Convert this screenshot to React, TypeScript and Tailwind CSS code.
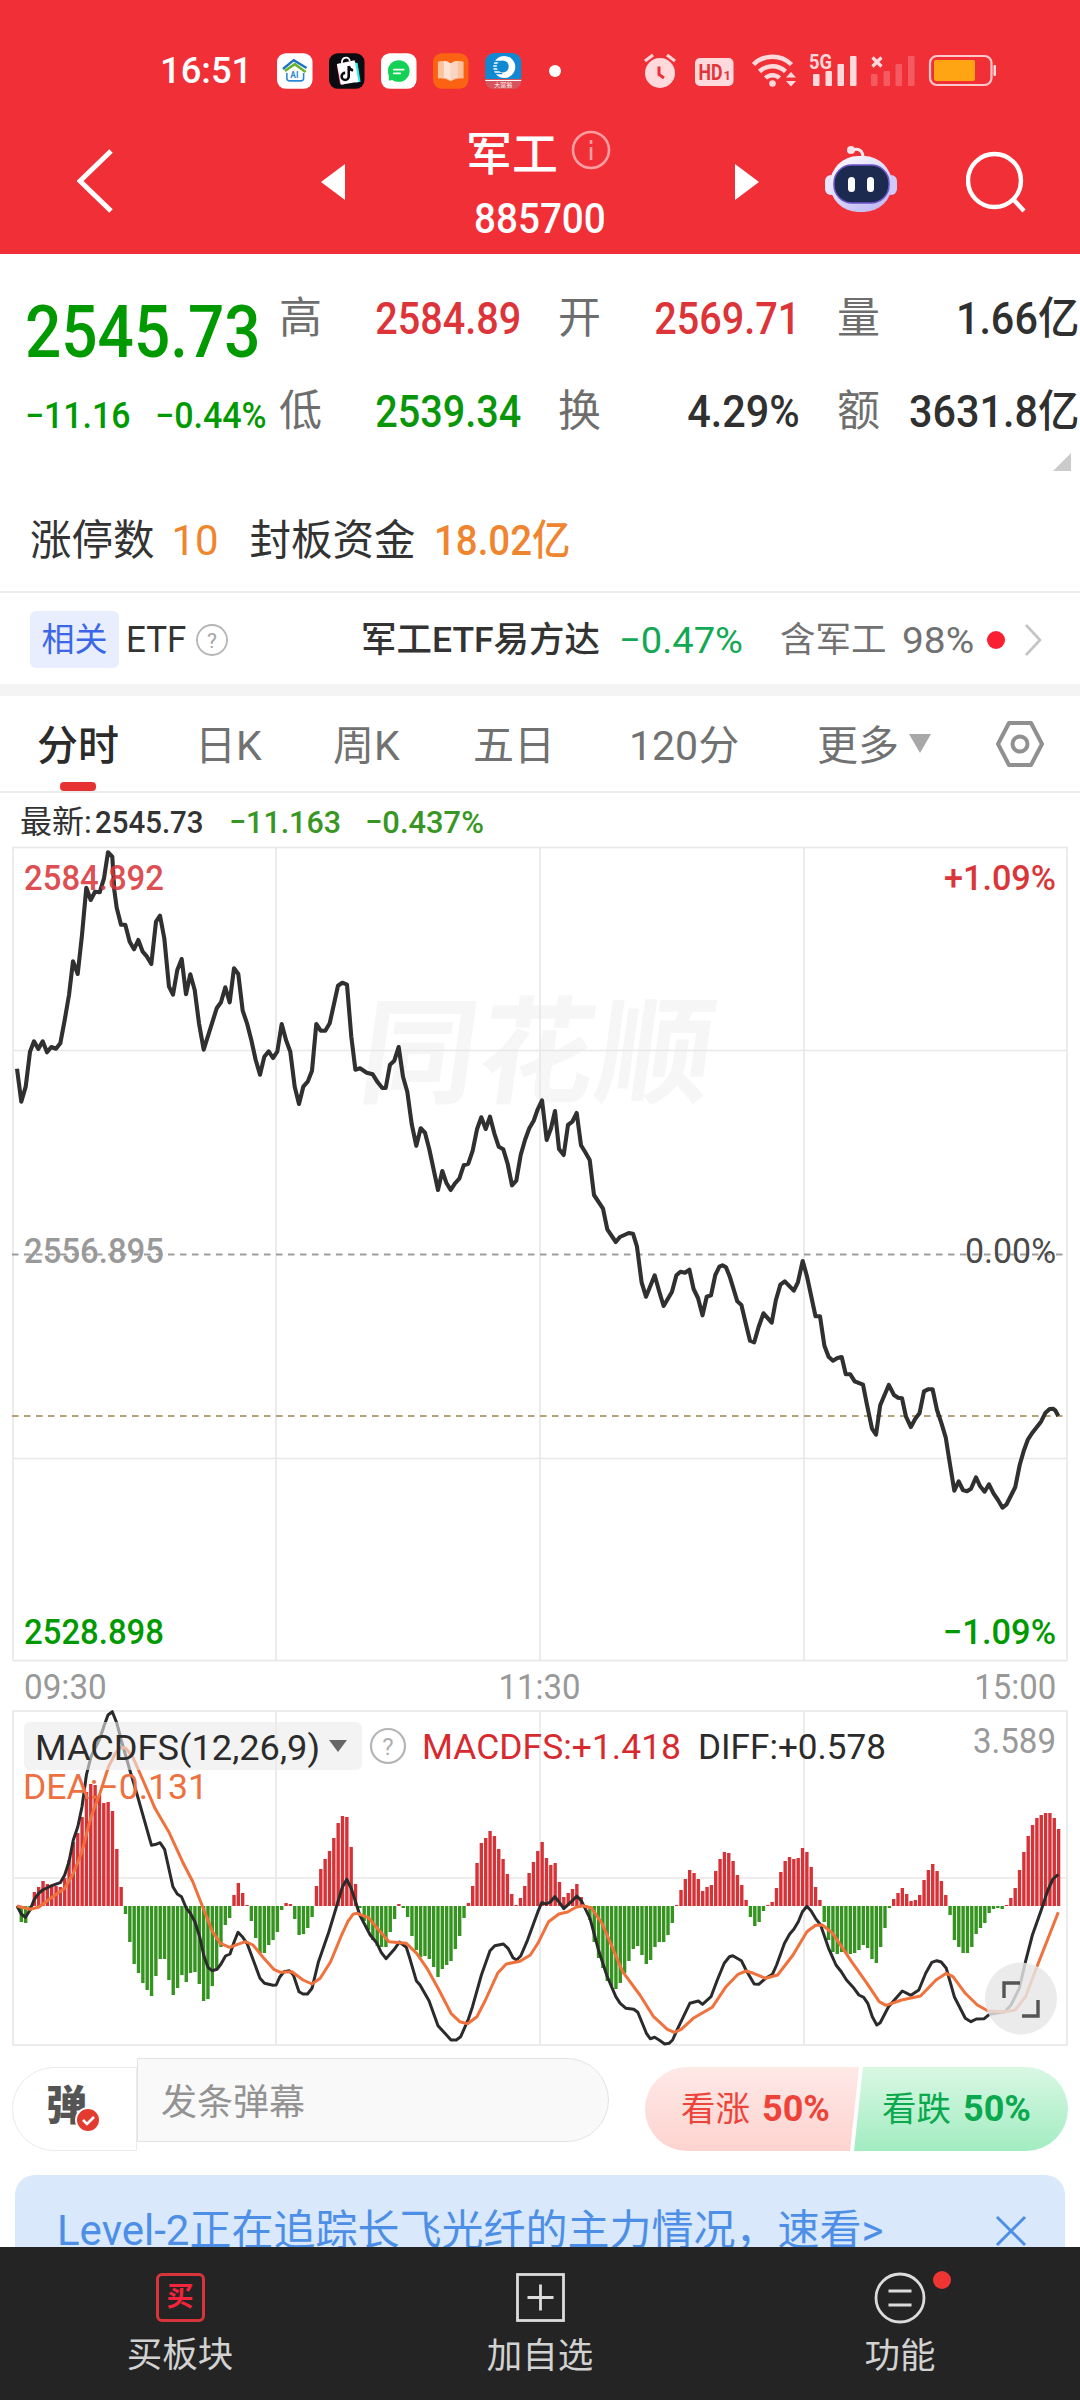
import type { ReactNode } from "react";
import clsx from "clsx";

// Intraday price line, x/y in chart pixels
const PRICE =
  "17,1068.7 21.3,1101.7 25.7,1086.7 30,1051.7 34,1041.3 38.3,1049 42.7,1041.3 47,1052.3 51.3,1047 56,1048.7 60.3,1043.3 64.7,1020 69,995 73,961.3 77.7,974 82,935 86.3,887.7 90.7,900 95,891.7 99.7,892.3 104,878.3 108,852.3 112.3,856.7 114.3,890 116.7,907.7 121,924.7 125.3,924.7 129.7,941.7 134,949.3 138.3,940 142.7,951.7 147,956.7 151.3,964 156,921.7 160,915.7 164.3,938.3 169,986.7 173,994.7 177.3,970 181.7,959 186,994.3 190.3,974.3 194.7,990 199,1023.3 203.7,1049.7 216.7,1008.3 221,1002.3 225.3,987.3 229.7,1002.3 234,968.3 238.3,974 242.7,1010.7 247,1023.3 251.3,1040 255.7,1060 260,1074.7 264.3,1056.7 268.7,1051.3 273,1058 277.3,1051.7 281.7,1024 286,1040 290.3,1051.7 294.7,1086.7 299,1104 303.3,1086.7 307.7,1081.7 312,1070.7 316.3,1024 320.7,1030.7 325.3,1030.7 329.7,1023.3 338,985.7 342.3,982.7 347,984.7 351.3,1036.7 355.4,1069.7 360,1068.3 366.7,1072.7 372.7,1074.3 377.7,1082.3 382.3,1088 385.7,1088 390,1064.7 394.3,1060.7 398.7,1047 403,1076.7 407.3,1091.7 411.7,1124 416.3,1145.7 420.7,1128.3 425,1132.7 429.3,1149.3 438,1190 442.3,1171 446.3,1182.7 450.7,1190 455,1183.3 459.3,1178.7 463.7,1165.3 468.3,1163.7 472.7,1150.7 477,1129.3 481.3,1117.3 485.7,1129 490,1116.7 494.3,1133.3 498.7,1146.7 503.3,1149.3 507.7,1164 512,1185.3 516.3,1180.7 520.7,1155 525,1140 529.3,1128.3 533.7,1120.7 537.7,1109.3 542,1100.3 546.7,1140 551,1128.3 555,1111 559,1149 563.7,1155 568,1125 572.3,1121.7 576.7,1113 581,1145.3 585.3,1152.3 589.7,1160 594,1195 603,1208.7 607.3,1229.3 615.8,1242 619.9,1237 628.8,1233 633,1233.7 637,1246.7 641.6,1282.3 646,1296.7 654.7,1275.3 659,1290.7 663.6,1306 671.9,1292 676.4,1275.3 680.5,1271.7 685,1272.7 689.4,1269.7 693.6,1289 698,1298 702.5,1315.3 706.7,1296.7 711,1295.3 715.3,1275 719.4,1266.7 722.5,1265.3 726,1267.3 730,1277.3 737.3,1301.3 741.4,1305 745.6,1322.7 750,1340.7 754.2,1342.3 758.7,1326.7 763.5,1313.3 771.7,1322.7 775.9,1300 780.4,1284.7 784.8,1281.3 793.8,1290.7 797.9,1282.3 802.7,1261 806.9,1276 815.5,1316.3 820,1316.3 824.4,1345.7 828.6,1356.7 833,1360.7 837.5,1358 841.7,1357 845.8,1374.3 850.3,1374.3 854.7,1381.3 863,1384.7 867.1,1405.3 872,1428.7 876,1434.7 880.2,1405.3 888.8,1385 894,1395 898,1397.7 902,1398.3 906,1416.7 910.9,1427 915.3,1418.7 919.5,1413.3 924,1391.3 928,1389.3 932.6,1389.3 937,1410 941.5,1423.3 945.7,1437.3 949.8,1463.3 954.3,1490.7 958.7,1481.3 962.9,1490 967,1491.3 971,1488.7 976,1477.3 980,1486 984.6,1491.7 989,1484.3 993.5,1493.3 998,1500 1002.5,1507.7 1006.6,1504.3 1015.2,1487.3 1019.7,1465 1023.8,1450.7 1028,1439.3 1032.4,1432.7 1041,1421.7 1045.5,1412.7 1049.6,1409 1053,1408.7 1055.5,1410.7 1058.3,1416";

const DIFF =
  "17,1906 21.3,1914 25.5,1917.3 30,1910 34,1900 38.6,1893.3 42.7,1890 51.7,1885.7 60.3,1882.7 64.7,1875 69,1861.7 73.3,1840 77.8,1826.7 82,1806.7 86.4,1775 91,1756.7 100,1738.3 104,1726 108,1715 112.3,1711.7 116.7,1722.7 121.2,1740 129.8,1770 136.7,1793.3 151.5,1845.3 156,1844.3 160,1842.7 164.6,1849.3 172.9,1886.7 177.3,1894 181.5,1896.7 186.3,1908.3 190.4,1913.3 194.9,1921.7 199.7,1936.7 203.9,1956 208,1967.3 212,1970.7 217,1969.3 221,1964 225.5,1956 230,1954 234.2,1941.7 238,1932.3 242.8,1937.3 247,1943.3 251.4,1955 260,1978.3 264.5,1983.3 273,1985.3 276.2,1985 279.6,1977.3 284,1971.7 289.3,1970.7 293.4,1975 299,1991.7 303,1994 307.5,1994 312,1988.3 318.5,1961.7 328.9,1931.7 337.5,1903.3 342.3,1887.3 346.8,1879.3 351.2,1888.3 359.8,1915 370.2,1935 377,1943.3 381.2,1952.3 386,1958.7 394.3,1949.3 399.4,1942 406.3,1947.3 409.8,1958.3 416.3,1980.7 420,1985 429,2000.7 438,2025.7 444.9,2033.3 451,2040 456.3,2040 460.7,2036.7 468.3,2019.3 472.5,2006.7 481.4,1975 490,1950.7 494.8,1945.7 503.4,1944 508,1948.3 513,1957.7 516.5,1960 520.7,1956 526.9,1941.7 537.9,1911.7 541.7,1902.7 546.2,1904 550.3,1902 554.8,1896.7 559.6,1902.7 563.8,1908.7 572.4,1900.7 576.8,1896 581.3,1900.7 590,1918.3 598.5,1950 607,1976 615.8,1996.7 620.2,2003.3 626,2008.3 633.7,2009.3 637.8,2012.3 646.4,2033.3 650.2,2038.7 654.7,2037.3 659.5,2040.3 664.7,2044 669,2043.3 672.6,2040 676.7,2030.7 689.8,2003.3 698.4,2001 702.5,2004.3 711,1996.7 717.3,1980 724.2,1963.3 729.4,1956.7 732.8,1955.7 741.4,1960.7 746,1970 754.2,1984 758.7,1984.3 765.6,1978.3 772.4,1974.3 776.6,1965 784.5,1943.3 789.7,1934 793.8,1929.3 798.3,1921.7 802.4,1911.7 806.9,1906.3 811,1910.7 815.5,1918.3 820.6,1925 828.6,1948.3 836,1965 841.3,1971.7 846.5,1980 854,1988.3 858.9,1995 863.7,1997.3 867.8,2003.3 872.3,2016.7 876.8,2025 880.2,2022.7 888.5,2006.7 902.3,1991 910.9,1995.3 918.8,1990 925.7,1973.3 931.9,1962.3 936.7,1960.7 941.2,1962 946.3,1968.3 954.3,1996.7 965.3,2018.3 971,2021.7 976.3,2019 984.2,2018.7 989.4,2014.3 1004.9,2011.7 1011,2005 1019.3,1988.3 1025.5,1961.7 1032.4,1935 1041,1910.7 1047.9,1890 1053,1879 1058.3,1874.3";

const DEA =
  "17,1906 30,1909.3 38.6,1907.3 48.2,1900 64.7,1888.3 73.3,1873.3 82,1851.7 91,1816.7 100,1793.3 108.5,1766.7 115.4,1753.3 121.2,1747.3 125.7,1748.3 132.6,1756.7 142.9,1780 155,1808.3 168.7,1831.7 182.5,1861.7 192.8,1881.7 203.2,1908.3 212.5,1931.7 220.4,1943.3 229.7,1947.3 237.6,1944.3 245.5,1941.7 253,1945 263.4,1957.7 273.8,1969.3 280.6,1972.3 292,1971.7 303,1980 312,1984 320.2,1978.3 330.6,1961.7 340.9,1936.7 347.8,1921.7 353,1914.3 357,1913.3 368.5,1917.7 378.8,1930 389,1941.7 406.3,1943.3 416.7,1953.3 427,1968.3 439,1990 451,2013.3 459.7,2021.7 467.6,2023.7 476.9,2016.7 485.5,2000 497.6,1973.3 506.2,1964 520,1961.3 530.3,1955 537.9,1943.3 548.6,1921.7 558.9,1914 567.5,1912 576,1907.3 583,1905.7 591.7,1908.3 602,1923.3 610.6,1943.3 622.6,1971.7 639.9,1995 653.6,2016.7 667.4,2029.3 674.3,2032.3 681.2,2029.3 693.2,2018.3 712.2,2007.3 726,1986.7 738,1974.3 746,1971 753.5,1973.3 765.6,1978.3 777.6,1975 793,1955 806.9,1931.7 815.5,1925.3 822.4,1925 832.7,1933.3 851.6,1961.7 867,1983.3 879.2,2001.7 886,2005.3 901.6,2000 920.5,1996 936,1980 946.3,1973.3 953,1976.7 965.3,1993.3 977.3,2005 987.7,2010.7 1003,2012 1015.2,2010 1025.5,1996.7 1037.6,1965 1058.3,1912.3";

// One MACD bar per minute, positive bars are red
const BARS = [
  0, -16, -17, -5, 14, 19, 25, 22, 21, 20, 19, 28, 46, 64, 73, 89, 114, 122, 121, 111,
  103, 104, 95, 57, 19, -8, -36, -58, -67, -77, -84, -90, -70, -53, -53, -74, -89, -82, -69, -76,
  -67, -66, -78, -95, -93, -80, -62, -41, -19, -12, 11, 23, 13, 1, -15, -32, -47, -47, -39, -34,
  -26, -4, 3, 2, -13, -29, -28, -22, -11, 20, 37, 47, 55, 68, 83, 90, 89, 59, 22, -2,
  -15, -24, -34, -40, -41, -41, -26, -13, 2, -2, -11, -30, -44, -51, -50, -53, -61, -71, -63, -59,
  -55, -43, -30, -12, 3, 20, 43, 63, 68, 75, 70, 57, 47, 32, 12, 1, 8, 20, 33, 44,
  55, 64, 48, 41, 43, 24, 9, 13, 17, 22, 9, 1, -14, -36, -52, -62, -75, -80, -83, -77,
  -67, -55, -43, -40, -49, -58, -54, -41, -36, -36, -29, -17, 1, 16, 27, 36, 33, 27, 15, 19,
  21, 35, 47, 54, 53, 45, 31, 21, 6, -11, -20, -16, -5, 1, 4, 18, 34, 45, 49, 47,
  48, 58, 54, 39, 19, 6, -16, -34, -46, -48, -46, -47, -48, -47, -44, -39, -42, -53, -57, -41,
  -22, -2, 7, 13, 18, 12, 5, 6, 11, 26, 36, 42, 35, 25, 11, -9, -34, -41, -47, -47,
  -41, -28, -22, -17, -7, -3, -2, -3, 1, 8, 18, 36, 54, 70, 81, 88, 91, 93, 93, 88, 77,
];

const NUM = "inline-block whitespace-nowrap font-medium leading-none";

function StatusBar() {
  return (
    <div className="flex h-full items-center pt-[42px] pl-[160px]">
      <span className="w-[117px] text-[37.5px] leading-none font-medium text-white">
        <span className="inline-block origin-left scale-x-[0.97]">16:51</span>
      </span>
      <div className="flex gap-[16.5px]">
        <svg width="35.5" height="36" viewBox="0 0 36 36">
          <rect width="36" height="36" rx="9" fill="#fff" />
          <path d="M6 16 17 7l13 8" fill="none" stroke="#1d72c4" strokeWidth="2.4" />
          <path d="M8 18 18 11l11 8" fill="none" stroke="#6ab42d" strokeWidth="2.6" />
          <path d="M10 20v5q0 3 3 3h11q3 0 3-3v-5" fill="none" stroke="#2b88d8" strokeWidth="1.6" />
          <text x="13.5" y="25" fontSize="8.5" fontWeight="700" fill="#2b88d8">AI</text>
        </svg>
        <svg width="35.5" height="36" viewBox="0 0 36 36">
          <rect width="36" height="36" rx="9" fill="#0b0b12" />
          <path d="m8 12 3-2 4 22-4-1z" fill="#ff2a56" />
          <path d="m25 9 4 1 3 19-5 1z" fill="#2bf0ea" />
          <path d="m8 11 18-4 4 22-18 3z" fill="#fff" />
          <path d="M13 10c0-7 8-7 8-2" fill="none" stroke="#fff" strokeWidth="1.8" />
          <path d="M20 13v10.5a3.6 3.6 0 1 1-3.6-3.6M20 13q1 4 4.5 4.3" fill="none" stroke="#0b0b12" strokeWidth="2.6" />
        </svg>
        <svg width="35.5" height="36" viewBox="0 0 36 36">
          <rect width="36" height="36" rx="9" fill="#fff" />
          <circle cx="18" cy="18" r="11" fill="#12d155" />
          <path d="M8 22v6l7-2z" fill="#12d155" />
          <path d="M13 16.5h10M13 20.5h6.5" stroke="#fff" strokeWidth="1.8" strokeLinecap="round" />
        </svg>
        <svg width="35.5" height="36" viewBox="0 0 36 36">
          <rect width="36" height="36" rx="9" fill="#fb6312" />
          <path d="M5 8.5q7-2 13 2 6-4 13-2v17q-7-1-13 3-6-4-13-3z" fill="#fbc2a0" />
          <path d="M11 7.5q4 0 7 3v17q-3-3-7-3z" fill="#fde4d6" />
          <path d="M25 7.5q-4 0-7 3v17q3-3 7-3z" fill="#fbd5c1" />
        </svg>
        <svg className="overflow-visible" width="36.5" height="36" viewBox="0 0 36 36">
          <rect width="36" height="36" rx="9" fill="#1188d2" />
          <path d="M0 26h36v1q0 9-9 9H9q-9 0-9-9z" fill="#d8545c" />
          <path d="M0 27.5h36" stroke="#fff" strokeWidth="1" />
          <circle cx="19" cy="14" r="11" fill="#fff" />
          <circle cx="17.5" cy="13.5" r="6" fill="#1188d2" />
          <path d="M8 8.5h8M7 11.5h8M7 14.5h8M7 17.5h8M9 20.5h8" stroke="#1188d2" strokeWidth="1.3" />
          <text x="18" y="34" textAnchor="middle" fontSize="6" fill="#fff">大富翁</text>
        </svg>
      </div>
      <span className="ml-[27px] size-3 rounded-full bg-white" />
      <svg className="ml-[82px] overflow-visible" width="356" height="36" viewBox="643 53 356 36" fill="#ffd9db">
        <circle cx="660" cy="73" r="15" />
        <path d="m645 61 8-6M675 61l-8-6" stroke="#ffd9db" strokeWidth="3" />
        <path d="M659 66.5v8l5 3.5" fill="none" stroke="#f12f36" strokeWidth="3" />
        <rect x="695" y="58" width="38.5" height="28" rx="5" />
        <text x="698.5" y="80" fontSize="22" fontWeight="700" fill="#e0353b" textLength="24" lengthAdjust="spacingAndGlyphs">HD</text>
        <text x="723.5" y="80" fontSize="13" fontWeight="700" fill="#e0353b">1</text>
        <g fill="none" stroke="#ffd9db" strokeWidth="4.5">
          <path d="M753.5 64.5a27 27 0 0 1 38 0" />
          <path d="M759.5 71.5a19 19 0 0 1 26 0" />
          <path d="M765.5 78a10 10 0 0 1 14 0" />
        </g>
        <circle cx="772.5" cy="83.5" r="3.3" />
        <path d="m786 77.5 5-5.5 5 5.5zM786 81l5 5.500 5-5.5z" />
        <text x="809" y="69" fontSize="21" fontWeight="700" textLength="23" lengthAdjust="spacingAndGlyphs">5G</text>
        <rect x="813" y="74" width="6.5" height="12" rx="1" />
        <rect x="825.5" y="71" width="6.5" height="15" rx="1" />
        <rect x="837.5" y="64" width="6.5" height="22" rx="1" />
        <rect x="850" y="56" width="6.5" height="30" rx="1" />
        <path d="m872.5 57.5 9 9m0-9-9 9" stroke="#ffd9db" strokeWidth="3.2" />
        <g opacity=".25">
          <rect x="871" y="74" width="6.5" height="12" rx="1" />
          <rect x="883.5" y="71" width="6.5" height="15" rx="1" />
          <rect x="895.5" y="64" width="6.5" height="22" rx="1" />
          <rect x="908" y="56" width="6.5" height="30" rx="1" />
        </g>
        <rect x="930" y="56" width="61.5" height="29" rx="7" fill="none" stroke="#ffc9cc" strokeWidth="2.2" />
        <rect x="934" y="60" width="41" height="21" rx="2" fill="#ffa514" />
        <rect x="993.5" y="65" width="2.5" height="11" rx="1" />
      </svg>
    </div>
  );
}

function Header() {
  return (
    <header className="h-[254px] bg-[#f12f36] text-white">
      <div className="h-[100px]">
        <StatusBar />
      </div>
      <div className="flex h-[154px] items-start pl-[77px]">
        <svg className="mt-[49px]" width="38" height="64" viewBox="0 0 38 64" fill="none" stroke="#fff" strokeWidth="5">
          <path d="M34 2 3 32l31 30" />
        </svg>
        <svg className="mt-[64px] ml-[206px]" width="24" height="36" viewBox="0 0 24 36" fill="#fff">
          <path d="M24 0v36L0 18z" />
        </svg>
        <div className="ml-[121px] w-[147px] shrink-0 pt-[28px]">
          <div className="flex items-center">
            <span className="text-[46px] leading-[52px] font-medium">军工</span>
            <svg className="ml-[13px] -mt-2 shrink-0" width="40" height="40" viewBox="0 0 40 40" fill="none" stroke="#ff9da1" strokeWidth="2.6">
              <circle cx="20" cy="20" r="18" />
              <path d="M20 17v13M20 10v4" />
            </svg>
          </div>
          <div className="mt-[18px] pl-[8px] text-[42px] leading-none font-medium">
            <span className="inline-block origin-left scale-x-[0.92]">885700</span>
          </div>
        </div>
        <svg className="mt-[64px] ml-[122px]" width="24" height="36" viewBox="0 0 24 36" fill="#fff">
          <path d="M0 0v36l24-18z" />
        </svg>
        <svg className="mt-[45px] ml-[66px]" width="72" height="68" viewBox="0 0 72 68">
          <defs>
            <linearGradient id="bot" x1="0" y1="0" x2="0.6" y2="1">
              <stop offset="0" stopColor="#fff" />
              <stop offset="1" stopColor="#c3bdf5" />
            </linearGradient>
          </defs>
          <path d="M27 5q11-3 11 8" fill="none" stroke="#fbe8f0" strokeWidth="3" />
          <circle cx="26" cy="5" r="4" fill="#fbe3ea" />
          <rect x="0" y="30" width="12" height="20" rx="6" fill="#e9e6fb" />
          <rect x="60" y="30" width="12" height="20" rx="6" fill="#cfcaf8" />
          <rect x="5" y="11" width="62" height="56" rx="28" fill="url(#bot)" />
          <rect x="9" y="20" width="55" height="38" rx="18" fill="#1d2a50" stroke="#6b55c9" strokeWidth="1.5" />
          <rect x="23" y="32" width="7" height="15" rx="3.5" fill="#fff" />
          <rect x="42" y="32" width="7" height="15" rx="3.5" fill="#fff" />
        </svg>
        <svg className="mt-[51px] ml-[69px]" width="62" height="62" viewBox="0 0 62 62" fill="none" stroke="#fff" strokeWidth="4.4">
          <circle cx="28.5" cy="29.5" r="26.5" />
          <path d="m47 48 11 12" />
        </svg>
      </div>
    </header>
  );
}

function Stat({ label, value, color }: { label: string; value: string; color: string }) {
  return (
    <div className="flex h-[93px] items-center justify-between">
      <span className="text-[43px] leading-none text-[#6e6e6e]">{label}</span>
      <span className={clsx(NUM, "origin-right text-[44px]", /[亿%]$/.test(value) ? "scale-x-[0.94]" : "scale-x-[0.9]", color)}>
        {value}
      </span>
    </div>
  );
}

function Quote() {
  return (
    <section className="h-[339px] border-b-2 border-[#ececec]">
      <div className="flex h-[211px] pt-[18px]">
        <div className="w-[279px] shrink-0 pt-[24px] pl-[25px] text-[#009a00]">
          <span className={clsx(NUM, "origin-left scale-x-[0.875] text-[73px]")}>2545.73</span>
          <div className="mt-[29px] flex items-center text-[36px] leading-none">
            <span className={clsx(NUM, "w-[130px]")}>
              <span className="inline-block origin-left scale-x-[0.94]">−11.16</span>
            </span>
            <span className={clsx(NUM, "origin-left scale-x-[0.945]")}>−0.44%</span>
          </div>
        </div>
        <div className="w-[242px] shrink-0">
          <Stat label="高" value="2584.89" color="text-[#dc3438]" />
          <Stat label="低" value="2539.34" color="text-[#0a960a]" />
        </div>
        <div className="ml-[37px] w-[242px] shrink-0">
          <Stat label="开" value="2569.71" color="text-[#dc3438]" />
          <Stat label="换" value="4.29%" color="text-[#303030]" />
        </div>
        <div className="ml-[37px] w-[242px] shrink-0">
          <Stat label="量" value="1.66亿" color="text-[#303030]" />
          <Stat label="额" value="3631.8亿" color="text-[#303030]" />
        </div>
      </div>
      <div className="flex h-[5px] justify-end pr-[9px]">
        <svg className="-mt-[12px] shrink-0" width="18" height="18" viewBox="0 0 18 18" fill="#cbcbcb">
          <path d="M18 0v18H0z" />
        </svg>
      </div>
      <div className="flex h-[138px] items-center pt-[4px] pl-[30px] text-[41.5px] leading-none text-[#333]">
        <span>涨停数</span>
        <span className="ml-[17px] w-[78px] text-[42px] text-[#f08530]">10</span>
        <span>封板资金</span>
        <span className={clsx(NUM, "ml-[18px] origin-left scale-x-[0.915] text-[42px] text-[#f08530]")}>18.02亿</span>
      </div>
    </section>
  );
}

function EtfRow() {
  return (
    <section className="flex h-[103px] items-center border-b-[12px] border-[#f4f4f4] pt-[2px] pl-[30px] text-[35.5px] leading-none text-[#333]">
      <span className="flex h-[57px] w-[89px] items-center justify-center rounded-md bg-[#e8eefd] text-[33px] text-[#3b66e8]">
        相关
      </span>
      <span className="ml-[7px] w-[62px] text-[36px]">
        <span className="inline-block origin-left scale-x-[0.97]">ETF</span>
      </span>
      <svg className="ml-[8px]" width="32" height="32" viewBox="0 0 32 32" fill="none" stroke="#b5b5b5" strokeWidth="1.8">
        <circle cx="16" cy="16" r="15" />
        <text x="16" y="23.5" textAnchor="middle" fontSize="21" fill="#a5a5a5" stroke="none">?</text>
      </svg>
      <span className="ml-[133px] w-[258px] pt-[2px] whitespace-nowrap font-medium">军工ETF易方达</span>
      <span className="w-[161px] pt-[2px] text-[37px] whitespace-nowrap text-[#12a854]">
        <span className="inline-block origin-left scale-x-[1.03]">−0.47%</span>
      </span>
      <span className="w-[122px] pt-[2px] text-[#717171]">含军工</span>
      <span className="w-[85px] pt-[2px] text-[37px] text-[#717171]">
        <span className="inline-block origin-left scale-x-[1.05]">98%</span>
      </span>
      <span className="size-[18px] shrink-0 rounded-full bg-[#fb1f33]" />
      <svg className="ml-[19px] shrink-0" width="20" height="34" viewBox="0 0 20 34" fill="none" stroke="#c4c4c4" strokeWidth="2.6">
        <path d="m2 2 14 15L2 32" />
      </svg>
    </section>
  );
}

const TABS = [
  { label: "分时", width: "w-[158px]" },
  { label: "日K", width: "w-[138px]" },
  { label: "周K", width: "w-[140px]" },
  { label: "五日", width: "w-[156px]" },
  { label: "120分", width: "w-[188px]" },
  { label: "更多", width: "w-[91px]" },
];

function Tabs() {
  return (
    <nav className="relative flex h-[97px] items-center border-b-2 border-[#ececec] pl-[37px] text-[41px] leading-none text-[#717171]">
      {TABS.map((tab, i) => (
        <span
          key={tab.label}
          className={clsx("pt-[6px] whitespace-nowrap", tab.width, i === 0 && "font-medium text-[#2b2b2b]")}
        >
          {tab.label}
        </span>
      ))}
      <svg width="24" height="19" viewBox="0 0 24 19" fill="#a8a8a8">
        <path d="M1 0h22L12 19z" />
      </svg>
      <svg className="ml-[63px]" width="50" height="48" viewBox="0 0 50 48" fill="none" stroke="#909090" strokeWidth="4">
        <path d="M14 3h22l11 21-11 21H14L3 24z" strokeLinejoin="round" />
        <circle cx="25" cy="24" r="7.5" />
      </svg>
      <span className="absolute bottom-0 left-[60px] h-[9px] w-[36px] rounded bg-[#e63232]" />
    </nav>
  );
}

function Label({ x, y, w, fill, size = 35, weight = 500, children }: {
  x: number; y: number; w: number; fill: string; size?: number; weight?: number; children: ReactNode;
}) {
  return (
    <text x={x} y={y} fill={fill} fontSize={size} fontWeight={weight} textLength={w} lengthAdjust="spacingAndGlyphs">
      {children}
    </text>
  );
}

function PriceChart() {
  return (
    <svg className="block" width="1080" height="818" viewBox="0 845 1080 818">
      <text
        x="0"
        y="0"
        transform="translate(356 1094) skewX(-8)"
        fontSize="116"
        fontWeight="700"
        fill="#f6f6f6"
        textLength="352"
      >
        同花顺
      </text>
      <g fill="none" stroke="#e8e8e8" strokeWidth="1.6">
        <rect x="13" y="847.5" width="1054" height="813" />
        <path d="M13 1050.5h1054M13 1458.5h1054M276 847v813M540 847v813M804 847v813" />
      </g>
      <path d="M12 1254.5h1054" stroke="#9d9d9d" strokeWidth="1.9" strokeDasharray="6.5 5.5" />
      <path d="M12 1416h1054" stroke="#b3a276" strokeWidth="1.9" strokeDasharray="6.5 5.5" />
      <polyline points={PRICE} fill="none" stroke="#303030" strokeWidth="4.1" strokeLinejoin="round" />
      <Label x={24} y={890} w={140} fill="#d9363ae6">2584.892</Label>
      <Label x={944} y={890} w={112} fill="#d9363a">+1.09%</Label>
      <Label x={24} y={1263} w={140} fill="#999">2556.895</Label>
      <Label x={965} y={1263} w={91} fill="#4a4a4a" weight={400}>0.00%</Label>
      <Label x={24} y={1644} w={140} fill="#009a00">2528.898</Label>
      <Label x={943} y={1644} w={113} fill="#009a00">−1.09%</Label>
    </svg>
  );
}

function MacdChart() {
  return (
    <svg className="block" width="1080" height="347" viewBox="0 1710 1080 347">
      <g fill="none" stroke="#e8e8e8" strokeWidth="1.6">
        <rect x="13" y="1711" width="1054" height="334" />
        <path d="M13 1878h1054M276 1711v334M540 1711v334M804 1711v334" />
      </g>
      {BARS.map((v, i) => (
        <rect
          key={i}
          x={15.3 + i * 4.34}
          y={v > 0 ? 1906 - v : 1906}
          width="3.4"
          height={Math.abs(v)}
          fill={v > 0 ? "#d63338" : "#35941f"}
        />
      ))}
      <polyline points={DIFF} fill="none" stroke="#2b2b2b" strokeWidth="3" strokeLinejoin="round" />
      <polyline points={DEA} fill="none" stroke="#f0713c" strokeWidth="3" strokeLinejoin="round" />

      <rect x="24" y="1722" width="338" height="48" rx="6" fill="#ebebeb" opacity=".6" />
      <Label x={35} y={1760} w={285} fill="#2b2b2b" weight={400}>MACDFS(12,26,9)</Label>
      <path d="M329 1740h18l-9 12z" fill="#666" />
      <circle cx="388" cy="1746" r="17" fill="none" stroke="#b5b5b5" strokeWidth="2.2" />
      <text x="388" y="1754.5" textAnchor="middle" fontSize="24" fill="#b0b0b0">?</text>
      <Label x={422} y={1759} w={259} fill="#d8292f" weight={400}>MACDFS:+1.418</Label>
      <Label x={698} y={1759} w={188} fill="#2b2b2b" weight={400}>DIFF:+0.578</Label>
      <Label x={973} y={1753} w={83} fill="#999" weight={400}>3.589</Label>
      <Label x={23} y={1799} w={185} fill="#ee7040" weight={400}>DEA:−0.131</Label>

      <circle cx="1021" cy="1998.5" r="36" fill="#e6e6e6" opacity=".82" />
      <path d="M1020 1983h-16v15M1022 2016h16v-16" fill="none" stroke="#555" strokeWidth="3.4" />
    </svg>
  );
}

function Chart() {
  return (
    <section>
      <div className="flex h-[52px] items-center pt-[6px] pl-[20px] text-[32px] leading-none text-[#333]">
        <span className="w-[75px] whitespace-nowrap">最新:</span>
        <span className={clsx(NUM, "w-[134px]")}>
          <span className="inline-block origin-left scale-x-[0.92]">2545.73</span>
        </span>
        <span className={clsx(NUM, "w-[136px] text-[#389624]")}>
          <span className="inline-block origin-left scale-x-[0.95]">−11.163</span>
        </span>
        <span className={clsx(NUM, "origin-left scale-x-[0.965] text-[#389624]")}>−0.437%</span>
      </div>
      <PriceChart />
      <div className="flex h-[47px] items-center justify-between px-[24px] pt-px text-[35px] leading-none text-[#999]">
        <span className="inline-block origin-left scale-x-[0.95]">09:30</span>
        <span className="inline-block scale-x-[0.94]">11:30</span>
        <span className="inline-block origin-right scale-x-[0.94]">15:00</span>
      </div>
      <MacdChart />
    </section>
  );
}

function DanmuRow() {
  return (
    <section className="flex h-[118px] pl-[12px] text-[34.5px] leading-none">
      <div className="relative mt-[10px] flex h-[84px] w-[125px] shrink-0 items-center rounded-l-full border border-[#ebebeb] pb-[5px] pl-[33px]">
        <span className="text-[41px] font-black text-[#555]">弹</span>
        <svg className="absolute top-[39px] left-[62px]" width="26" height="26" viewBox="0 0 26 26">
          <circle cx="13" cy="13" r="12" fill="#e33b30" stroke="#fff" strokeWidth="2" />
          <path d="m8 13 4 4 7-7" fill="none" stroke="#fff" strokeWidth="2.6" />
        </svg>
      </div>
      <div className="mt-px flex h-[84px] w-[472px] shrink-0 items-center rounded-r-full border border-[#e3e3e3] bg-[#f9f9f9] pt-[6px] pl-[23px] text-[36px] text-[#939393]">
        发条弹幕
      </div>
      <div className="relative mt-[10px] ml-[36px] flex h-[84px] w-[423px] shrink-0 items-center">
        <svg className="absolute inset-0" width="423" height="84" viewBox="0 0 423 84">
          <defs>
            <linearGradient id="up" x1="0" y1="0" x2="0" y2="1">
              <stop offset="0" stopColor="#fee9e7" />
              <stop offset="1" stopColor="#fdd3cf" />
            </linearGradient>
            <linearGradient id="down" x1="0" y1="0" x2="0" y2="1">
              <stop offset="0" stopColor="#d9f8e4" />
              <stop offset="1" stopColor="#a2ecc1" />
            </linearGradient>
          </defs>
          <path d="M42 0h172l-9 84H42a42 42 0 0 1 0-84z" fill="url(#up)" />
          <path d="M218 0h163a42 42 0 0 1 0 84H209z" fill="url(#down)" />
        </svg>
        <span className="relative ml-[36px] text-[#ee4338]">看涨</span>
        <span className="relative ml-[12px] w-[120px] text-[36px] font-bold text-[#ee4338]">
          <span className="inline-block origin-left">50%</span>
        </span>
        <span className="relative text-[#0ba84e]">看跌</span>
        <span className="relative ml-[12px] text-[36px] font-bold text-[#0ba84e]">
          <span className="inline-block origin-left">50%</span>
        </span>
      </div>
    </section>
  );
}

function Banner() {
  return (
    <section className="h-[72px] overflow-hidden px-[15px]">
      <div className="flex h-[112px] items-center justify-between rounded-[20px] bg-[#d9e8fa] pr-[38px] pl-[42px] text-[#4d8fe6]">
        <span className="text-[42px] leading-none whitespace-nowrap">
          Level-2正在追踪长飞光纤的主力情况，速看&gt;
        </span>
        <svg width="32" height="32" viewBox="0 0 32 32" fill="none" stroke="#4d8fe6" strokeWidth="3">
          <path d="m2 2 28 28M30 2 2 30" />
        </svg>
      </div>
    </section>
  );
}

function BottomBar() {
  return (
    <footer className="grid h-[153px] grid-cols-3 bg-[#242424] text-[35.5px] leading-none text-[#d2d2d2]">
      <div className="flex flex-col items-center pt-[26px]">
        <span className="flex size-[49px] items-center justify-center rounded-md border-[3px] border-[#d8343c] text-[27px] font-bold text-[#f5243a]">
          买
        </span>
        <span className="mt-[16px]">买板块</span>
      </div>
      <div className="flex flex-col items-center pt-[26px]">
        <svg width="49" height="49" viewBox="0 0 49 49" fill="none" stroke="#dcdcdc" strokeWidth="2.8">
          <rect x="1.5" y="1.5" width="46" height="46" />
          <path d="M24.5 11.5v26M11.5 24.5h26" />
        </svg>
        <span className="mt-[17px]">加自选</span>
      </div>
      <div className="relative flex flex-col items-center pt-[25px]">
        <svg width="52" height="52" viewBox="0 0 52 52" fill="none" stroke="#dcdcdc" strokeWidth="2.8">
          <circle cx="26" cy="26" r="24" />
          <path d="M14.5 19h23M14.5 33h23" />
        </svg>
        <span className="mt-[15px]">功能</span>
        <span className="absolute top-[24px] left-[213px] size-[18px] rounded-full bg-[#ef3434]" />
      </div>
    </footer>
  );
}

export default function App() {
  return (
    <div className="h-[2400px] w-[1080px] overflow-hidden bg-white font-['Roboto','Noto_Sans_CJK_SC',sans-serif]">
      <Header />
      <Quote />
      <EtfRow />
      <Tabs />
      <Chart />
      <DanmuRow />
      <Banner />
      <BottomBar />
    </div>
  );
}
